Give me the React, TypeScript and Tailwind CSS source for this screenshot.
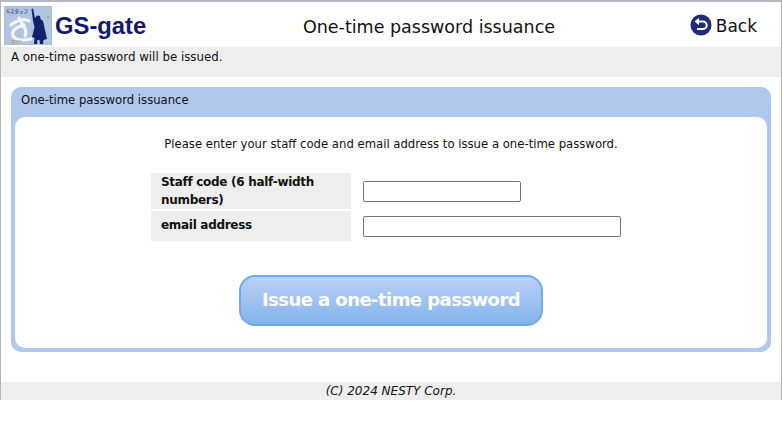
export default function App() {
  const font = { fontFamily: '"DejaVu Sans", Verdana, sans-serif' };
  return (
    <div className="w-[782px] h-[400px] border-x border-t-2 border-x-[#b5b5b5] border-t-[#b8b8c4] bg-white flex flex-col text-[12px] text-[#111]" style={font}>
      <header className="h-[45px] flex items-center shrink-0">
        <svg width="48" height="39" viewBox="0 0 48 39" className="ml-[3px] mt-[1px] shrink-0">
          <rect width="48" height="39" fill="#a8bcd8" />
          <rect x="1" y="1" width="46" height="37" fill="#b2c4de" />
          <path d="M7 19 C13 14 21 12 25 15 M15 12 C18 19 24 23 21 30 M20 19 C12 21 7 25 9 30 C12 34 19 35 27 33" stroke="#f2f5fa" strokeWidth="3.2" fill="none" strokeLinecap="round" />
          <text x="2.5" y="7" fontSize="4.6" fontWeight="700" fill="#4c6388" style={{ fontFamily: '"Noto Sans CJK JP", sans-serif' }}>Gスタッフ</text>
          <text x="7" y="37" fontSize="4.6" fontWeight="700" fill="#a89a3c" style={{ fontFamily: '"Noto Sans CJK JP", sans-serif' }}>ﾌｧﾐﾘｰ</text>
          <path d="M27.5 3 L29 2.5 L30.5 10 L31 12 L33 9.5 L36 10 L36.5 13 L39 15 L41 24 L43 33 L39.5 34 L39 38 L36 38 L35.5 34 L33.5 34 L33 38 L30 38 L30.5 32 L28 31 L30.5 21 L29 15 Z" fill="#14206e" />
          <circle cx="44" cy="11" r="1.2" fill="#9bb070" />
        </svg>
        <div className="ml-[3px] mt-[2px] text-[23.8px] font-bold text-[#14176e] leading-none" style={{ fontFamily: '"Liberation Sans", Arial, sans-serif' }}>GS-gate</div>
        <div className="flex-1 text-center text-[17.5px] text-[#111] ml-[22px] mt-[6px]">One-time password issuance</div>
        <div className="flex items-center mr-[24px] gap-[4px] mt-[4px]">
          <svg width="22" height="22" viewBox="0 0 22 22" className="mt-[-3px]">
            <circle cx="11" cy="11" r="10.5" fill="#1f2d78" />
            <path d="M8 7.5 H13 A3.6 3.6 0 0 1 13 15 H7" fill="none" stroke="#fff" strokeWidth="2" />
            <path d="M9 3.8 L4.6 7.5 L9 11.2 Z" fill="#fff" />
          </svg>
          <span className="text-[17px] text-[#111]">Back</span>
        </div>
      </header>
      <div className="h-[30px] bg-[#eeeeee] pl-[10px] pt-[1px] shrink-0 leading-[18px] text-[11.8px]">A one-time password will be issued.</div>
      <main className="flex-1 px-[10px] pt-[10px]">
        <section className="h-[265px] w-[760px] bg-[#b2c7ec] rounded-[10px] p-[4px] pt-0 flex flex-col">
          <div className="h-[28px] pl-[6px] flex items-center shrink-0 text-[11.65px] mb-[2px]">One-time password issuance</div>
          <div className="flex-1 bg-white rounded-[10px] flex flex-col items-center">
            <p className="mt-[18px] leading-[18px] text-center text-[11.67px]">Please enter your staff code and email address to issue a one-time password.</p>
            <div className="mt-[20px] w-[470px] mr-[10px] flex flex-col gap-[2px] font-bold text-[12px] tracking-[-0.3px]">
              <div className="flex items-stretch">
                <div className="w-[200px] h-[36px] bg-[#eeeeee] pl-[10px] leading-[18px] shrink-0">Staff code (6 half-width numbers)</div>
                <div className="flex items-center pl-[12px]">
                  <input className="w-[158px] h-[21px] border border-[#767676] rounded-[2px] bg-white" />
                </div>
              </div>
              <div className="flex items-stretch">
                <div className="w-[200px] h-[30px] bg-[#eeeeee] pl-[10px] pt-[5px] leading-[18px] shrink-0">email address</div>
                <div className="flex pl-[12px] pt-[5px]">
                  <input className="w-[258px] h-[21px] border border-[#767676] rounded-[2px] bg-white" />
                </div>
              </div>
            </div>
            <button className="mt-[34px] w-[304px] h-[51px] pb-[2px] rounded-[16px] border-2 border-[#6eaaec] bg-gradient-to-b from-[#bad0f8] to-[#84b4ea] text-white font-bold text-[18px] tracking-[-0.55px]">
              Issue a one-time password
            </button>
          </div>
        </section>
      </main>
      <footer className="h-[18px] bg-[#eeeeee] text-center italic leading-[18px] shrink-0">(C) 2024 NESTY Corp.</footer>
    </div>
  );
}
